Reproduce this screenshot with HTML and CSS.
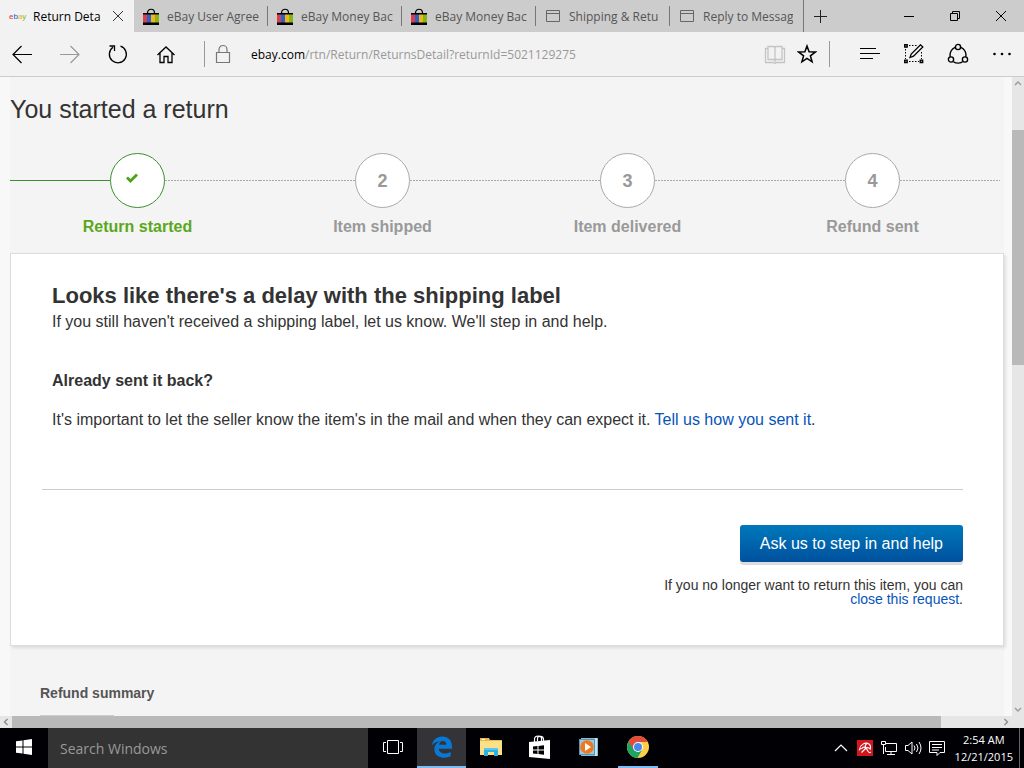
FILE: index.html
```html
<!DOCTYPE html>
<html lang="en">
<head>
<meta charset="utf-8">
<meta name="viewport" content="width=device-width, initial-scale=1">
<title>Return Details</title>
<link rel="stylesheet" href="styles.css">
</head>
<body>
<svg class="defs" width="0" height="0" aria-hidden="true">
  <symbol id="bag" viewBox="0 0 16 17">
    <path d="M4.500 5C4.500 0 11.500 0 11.500 5" fill="none" stroke="#000" stroke-width="1.200"/>
    <path d="M0 5h16v12H0z" fill="#000"/>
    <path d="M0 6.500h4v8H0z" fill="#dc3c4c"/><path d="M4 6.500h4v8H4z" fill="#2a63c4"/><path d="M8 6.500h4v8H8z" fill="#f0b41c"/><path d="M12 6.500h4v8h-4z" fill="#88b418"/>
  </symbol>
  <symbol id="page" viewBox="0 0 16 16">
    <path d="M1.500 2.500h13v11h-13zM1.500 5.500h13" fill="none" stroke="#666"/>
  </symbol>
</svg>

<header class="tabs">
  <div class="tab tab-active">
    <span class="logo" aria-hidden="true"><span class="r">e</span><span class="b">b</span><span class="y">a</span><span class="g">y</span></span>
    <button class="tab-title">Return Deta</button>
    <button class="tab-close" aria-label="Close tab"><svg width="12" height="12" viewBox="0 0 12 12"><path d="M1 1l10 10M11 1L1 11" stroke="#333" fill="none"/></svg></button>
  </div>
  <button class="tab"><svg width="16" height="17"><use href="#bag"/></svg><span class="tab-title">eBay User Agree</span></button>
  <button class="tab"><svg width="16" height="17"><use href="#bag"/></svg><span class="tab-title">eBay Money Bac</span></button>
  <button class="tab"><svg width="16" height="17"><use href="#bag"/></svg><span class="tab-title">eBay Money Bac</span></button>
  <button class="tab"><svg width="16" height="16"><use href="#page"/></svg><span class="tab-title">Shipping &amp; Retu</span></button>
  <button class="tab tab-last"><svg width="16" height="16"><use href="#page"/></svg><span class="tab-title">Reply to Messag</span></button>
  <button class="new-tab" aria-label="New tab"><svg width="14" height="14" viewBox="0 0 14 14"><path d="M7.500 1v13M1 7.500h13" stroke="#222" fill="none"/></svg></button>
  <div class="window-controls">
    <button aria-label="Minimize"><svg width="12" height="12" viewBox="0 0 12 12"><path d="M1 6.500h10" stroke="#000"/></svg></button>
    <button aria-label="Restore"><svg width="12" height="12" viewBox="0 0 12 12"><path d="M1.500 3.500h7v7h-7zM3.500 3.500v-2h7v7h-2" stroke="#000" fill="none"/></svg></button>
    <button aria-label="Close"><svg width="12" height="12" viewBox="0 0 12 12"><path d="M1 1l10 10M11 1L1 11" stroke="#000" fill="none"/></svg></button>
  </div>
</header>

<nav class="toolbar" aria-label="Browser">
  <div class="nav-buttons">
    <button aria-label="Back"><svg width="20" height="20" viewBox="0 0 20 20"><path d="M20 10.500H1M9.500 2L1 10.500 9.500 19" stroke="#000" stroke-width="1.200" fill="none"/></svg></button>
    <button aria-label="Forward"><svg width="20" height="20" viewBox="0 0 20 20"><path d="M0 10.500h19M10.500 2l8.500 8.500-8.500 8.500" stroke="#999" stroke-width="1.200" fill="none"/></svg></button>
    <button aria-label="Refresh"><svg width="20" height="20" viewBox="0 0 20 20"><path d="M12.500 2.200A8.500 8.500 0 1 1 5 3.300M1.500 2h5v5" stroke="#000" stroke-width="1.300" fill="none"/></svg></button>
    <button aria-label="Home"><svg width="20" height="20" viewBox="0 0 20 20"><path d="M1.500 11L10 3l8.500 8M4 9v9.500h4v-6h4v6h4V9" stroke="#000" stroke-width="1.300" fill="none"/></svg></button>
  </div>
  <span class="divider"></span>
  <svg class="lock" width="16" height="20" viewBox="0 0 16 20"><path d="M1.500 8.500h13v10h-13zM4 8.500V5.500a4 4 0 0 1 8 0v3" stroke="#777" stroke-width="1.200" fill="none"/></svg>
  <div class="address" role="textbox" contenteditable="true" aria-label="Address" spellcheck="false"><b>ebay.com</b>/rtn/Return/ReturnsDetail?returnId=5021129275</div>
  <div class="page-buttons">
    <button aria-label="Reading view"><svg width="22" height="20" viewBox="0 0 22 20"><path d="M11 3.500L10 2.500H4v13h6l1 1 1-1h6v-13h-6zM11 3v15M3.500 4.500h-2v14h8l1.500 1 1.500-1h8v-14h-2" stroke="#c4c4c4" stroke-width="1.300" fill="none"/></svg></button>
    <button aria-label="Add to favorites"><svg width="20" height="20" viewBox="0 0 20 20"><path d="M10 2l2.100 5.800 6.200.2-4.900 3.800 1.700 6-5.100-3.500-5.100 3.500 1.700-6L1.700 8l6.200-.2z" stroke="#000" stroke-width="1.500" fill="none"/></svg></button>
  </div>
  <span class="divider"></span>
  <div class="hub-buttons">
    <button aria-label="Hub"><svg width="20" height="20" viewBox="0 0 20 20"><path d="M0 4.500h16M0 9.500h20M0 14.500h13" stroke="#000" stroke-width="1.200"/></svg></button>
    <button aria-label="Make a web note"><svg width="20" height="20" viewBox="0 0 20 20"><path d="M5 1.500h8M1.500 5v10M17.500 8v7M5 17.500h10" stroke="#000" stroke-dasharray="1.500 1.500" fill="none"/><path d="M.700.700h2.500v2.500H.700zM.700 16.200h2.500v2.500H.700zM16.200 16.200h2.500v2.500h-2.500z" fill="#888" stroke="#000" stroke-width="1.300"/><path d="M6 13.500l1.200-3.500L16.500.8l2.300 2.200L9.500 12.200z" fill="#f2f2f2" stroke="#000" stroke-width="1.300"/></svg></button>
    <button aria-label="Share"><svg width="22" height="22" viewBox="0 0 22 22"><path d="M8 4.300A8.500 8.500 0 0 0 3.300 14M14 4.300A8.500 8.500 0 0 1 18.700 14M6.500 18.800a9 9 0 0 0 9 0" stroke="#000" stroke-width="1.400" fill="none"/><g fill="none" stroke="#000" stroke-width="1.400"><circle cx="11" cy="4" r="2.600"/><circle cx="4" cy="16.500" r="2.600"/><circle cx="18" cy="16.500" r="2.600"/></g></svg></button>
    <button aria-label="More"><svg width="20" height="4" viewBox="0 0 20 4"><circle cx="2.500" cy="2" r="1.300"/><circle cx="10" cy="2" r="1.300"/><circle cx="17.500" cy="2" r="1.300"/></svg></button>
  </div>
</nav>

<div class="viewport">
  <main class="page">
    <h1>You started a return</h1>
    <ol class="steps">
      <li class="step step-done"><div class="rail"><span class="circle"><svg width="14" height="10" viewBox="0 0 14 10" role="img" aria-label="Done"><path d="M2 4.500L5.500 8 12 1.500" stroke="#4ba21a" stroke-width="2.800" fill="none"/></svg></span></div><span>Return started</span></li>
      <li class="step"><div class="rail"><span class="circle">2</span></div><span>Item shipped</span></li>
      <li class="step"><div class="rail"><span class="circle">3</span></div><span>Item delivered</span></li>
      <li class="step"><div class="rail"><span class="circle">4</span></div><span>Refund sent</span></li>
    </ol>
    <section class="card">
      <div class="message">
        <h2>Looks like there's a delay with the shipping label</h2>
        <p>If you still haven't received a shipping label, let us know. We'll step in and help.</p>
        <h3>Already sent it back?</h3>
        <p>It's important to let the seller know the item's in the mail and when they can expect it. <a href="#">Tell us how you sent it</a>.</p>
      </div>
      <div class="actions">
        <button class="primary">Ask us to step in and help</button>
        <p>If you no longer want to return this item, you can<br><a href="#">close this request</a>.</p>
      </div>
    </section>
    <section class="summary">
      <h4>Refund summary</h4>
      <div class="summary-rule"></div>
    </section>
  </main>
  <div class="scroll-y" aria-hidden="true">
    <svg width="8" height="12" viewBox="0 0 8 12"><path d="M1 8l3-3 3 3" stroke="#999" stroke-width="1.300" fill="none"/></svg>
    <div class="track-y"><div class="thumb-y"></div></div>
    <svg width="8" height="12" viewBox="0 0 8 12"><path d="M1 4l3 3 3-3" stroke="#999" stroke-width="1.300" fill="none"/></svg>
  </div>
</div>
<div class="scroll-x" aria-hidden="true">
  <svg width="12" height="12" viewBox="0 0 12 12"><path d="M7.500 3l-3 3 3 3" stroke="#888" stroke-width="1.300" fill="none"/></svg>
  <div class="track-x"><div class="thumb-x"></div></div>
  <svg width="12" height="12" viewBox="0 0 12 12"><path d="M4.500 3l3 3-3 3" stroke="#888" stroke-width="1.300" fill="none"/></svg>
</div>

<footer class="taskbar">
  <button class="task" aria-label="Start"><svg width="16" height="16" viewBox="0 0 16 16"><path d="M0 2.300L6.500 1.400v6.100H0zM7.500 1.200L16 0v7.500H7.500zM0 8.500h6.500v6.100L0 13.700zM7.500 8.500H16V16l-8.500-1.200z" fill="#fff"/></svg></button>
  <input class="search" type="text" placeholder="Search Windows" aria-label="Search Windows">
  <button class="task" aria-label="Task view"><svg width="20" height="16" viewBox="0 0 20 16"><path d="M4.500 1.500h11v13h-11zM3 3.500H.500v9H3M17 3.500h2.500v9H17" stroke="#fff" fill="none"/></svg></button>
  <button class="task task-current" aria-label="Edge"><svg width="20" height="22" viewBox="0 0 20 22"><path d="M0 9.600C.7 4 4.700.5 10.300.5 16.500.5 20 4.800 20 10.500v2.200H6.700c.2 3.200 3 4.800 6.300 4.800 2.300 0 4.200-.6 5.700-1.500v4.300c-1.800.9-4 1.400-6.500 1.400C6.300 21.700 2.400 18.500 2.400 13.300c0-3.500 2-6.500 5.200-8C4.500 5.600 1.600 7 0 9.600zm7-.9h7.300c0-2.400-1.200-3.700-3.500-3.700C8.700 5 7.300 6.500 7 8.700z" fill="#0878d7"/></svg></button>
  <button class="task" aria-label="File Explorer"><svg width="22" height="20" viewBox="0 0 22 20"><path d="M0 1h9l1 2h12v15H0z" fill="#e9b94a"/><path d="M0 4h22v14H0z" fill="#fbe08a"/><path d="M4 11h14v8h-4v-4H8v4H4z" fill="#2fb0df"/><path d="M4 11h14v2H4z" fill="#55c9ec"/><path d="M2 2h3v1H2z" fill="#fff"/></svg></button>
  <button class="task" aria-label="Store"><svg width="22" height="24" viewBox="0 0 22 24"><path d="M5.500 7V4c0-4 7-4 7 0v2M8.500 6V3.500c0-3 6-3 6 1V6" stroke="#fff" stroke-width="1.200" fill="none"/><path d="M0 7l21-2v19L0 22z" fill="#fff"/><path d="M4 11.500l4.500-.5v3.500H4zM9.500 10.900l5.500-.6v4.200H9.500zM4 15.500h4.500V19L4 18.500zM9.500 15.500H15v4.200l-5.500-.6z" fill="#000"/></svg></button>
  <button class="task" aria-label="Media Player"><svg width="22" height="20" viewBox="0 0 22 20"><path d="M3 1h17v18H3z" fill="#80bfd9"/><path d="M17 1h2v18h-2z" fill="#c7e5f0"/><path d="M1 2h16v16H1z" fill="#5a94b5"/><path d="M2 3h14v14H2z" fill="#9ccbe0"/><circle cx="9" cy="10" r="6.800" fill="#ed7a22"/><path d="M7 6l6 4-6 4z" fill="#fff"/></svg></button>
  <button class="task task-open" aria-label="Chrome"><svg width="22" height="22" viewBox="0 0 22 22"><circle cx="11" cy="11" r="11" fill="#fdd047"/><path d="M11 11L1.500 5.500A11 11 0 0 0 10.500 22l4.800-8.500z" fill="#1da462"/><path d="M1.500 5.500A11 11 0 0 1 20.800 6H11l-4.300 7.500z" fill="#e24c3d"/><circle cx="11" cy="11" r="5" fill="#fff"/><circle cx="11" cy="11" r="4" fill="#4a87ee"/></svg></button>
  <div class="tray">
    <button aria-label="Show hidden icons"><svg width="14" height="10" viewBox="0 0 14 10"><path d="M1 8l6-6 6 6" stroke="#fff" stroke-width="1.200" fill="none"/></svg></button>
    <button aria-label="Antivirus"><svg width="16" height="16" viewBox="0 0 16 16"><path d="M0 0h16v16H0z" fill="#d4151e"/><path d="M2.500 9.500C3 5 8 1.500 12 4c1.500 1 1.800 3 1.300 5.200C12 7.800 10.500 7.300 9.300 8 7.500 6.800 5.800 7 4.800 8.500c-.8-.2-1.600.2-2.300 1z" stroke="#fff" stroke-width="1.100" fill="none"/><path d="M9 8l-4.500 4.500M9 8l2.500 4c.7.900 1.600.7 2.300 0M9 8C7.500 6 8.500 4.500 10 3.500" stroke="#fff" stroke-width="1.200" fill="none"/></svg></button>
    <button aria-label="Network"><svg width="18" height="16" viewBox="0 0 18 16"><path d="M6 3.500h10.500v8H5.500V7M11 12v2.500M7 14.500h8M1.500 1.500h4v3h-4zM3.500 5v9" stroke="#fff" fill="none"/></svg></button>
    <button aria-label="Volume"><svg width="18" height="16" viewBox="0 0 18 16"><path d="M1.500 5.500H4l4-3.500v12l-4-3.500H1.500zM10 5.500q2 2.500 0 5M12.500 4q3 4 0 8M15 2q4 6 0 12" stroke="#fff" fill="none"/></svg></button>
    <button aria-label="Notifications"><svg width="16" height="16" viewBox="0 0 16 16"><path d="M.500 1.500h15v11H11l-3 3v-3H.500zM3 4.500h10M3 7.500h10M3 10h7" stroke="#fff" fill="none"/></svg></button>
    <time class="clock" datetime="2015-12-21T02:54">2:54 AM<br>12/21/2015</time>
    <span class="show-desktop"></span>
  </div>
</footer>
</body>
</html>
```
FILE: styles.css
```css
* { box-sizing: border-box; }
html { background: #f2f2f2; }
body {
  margin: 0;
  min-height: 100vh;
  display: flex;
  flex-direction: column;
  font-family: "Liberation Sans", Arial, sans-serif;
  font-size: 16px;
  color: #333;
}
button, input { font: inherit; color: inherit; border: 0; margin: 0; padding: 0; background: none; }
button { display: flex; align-items: center; justify-content: center; }
h1, h2, h3, h4, p, ol { margin: 0; padding: 0; }
svg { display: block; flex: none; }
a { color: #0654ba; text-decoration: none; }
.defs { position: absolute; }

.tabs, .toolbar { font-family: "Open Sans", "Noto Sans", sans-serif; font-size: 12px; }
.tabs { display: flex; height: 32px; background: #ccc; color: #555; }
.tab {
  flex: 0 1 134px;
  min-width: 0;
  display: flex;
  align-items: center;
  justify-content: flex-start;
  gap: 8px;
  padding: 0 8px 0 9px;
  background: linear-gradient(#777, #777) right center / 1px 20px no-repeat;
}
.tab-active { background: #f2f2f2; color: #000; padding-right: 9px; }
.tab-active .tab-title { flex: 1; justify-content: flex-start; }
.tab-last { background: none; border-right: 1px solid #777; }
.tab-title { overflow: hidden; white-space: nowrap; min-width: 0; }
.tab-close { width: 14px; height: 20px; }
.logo { font: 8px "Liberation Sans", Arial, sans-serif; width: 16px; }
.r { color: #e53238; } .b { color: #0064d2; } .y { color: #f5af02; } .g { color: #86b817; }
.new-tab { width: 32px; }
.window-controls { display: flex; margin-left: auto; }
.window-controls button { width: 46px; }

.toolbar {
  display: flex;
  align-items: center;
  height: 45px;
  padding: 0 4px 0 2px;
  background: #f2f2f2;
  border-bottom: 1px solid #ccc;
}
.nav-buttons, .hub-buttons { display: flex; gap: 8px; }
.page-buttons { display: flex; }
.nav-buttons button { width: 40px; height: 40px; }
.page-buttons button { width: 32px; height: 40px; }
.hub-buttons button { width: 36px; height: 40px; }
.divider { width: 1px; height: 26px; background: #999; margin: 0 10px 0 18px; }
.page-buttons + .divider { margin: 0 22px 0 6px; }
.address { flex: 1; margin-left: 20px; min-width: 0; overflow: hidden; white-space: nowrap; color: #999; outline: 0; }
.address b { font-weight: 400; color: #000; }

.viewport { flex: 1; display: flex; background: #f8f8f8; }
.page {
  flex: 1;
  min-width: 0;
  padding: 16px 0 0;
  margin: 0 8px 0 10px;
  background: #f4f4f4;
}
h1 { font-size: 25px; line-height: 32px; font-weight: 400; }
.steps { display: flex; list-style: none; padding: 28px 9px 16px 5px; }
.step { flex: 1; text-align: center; font-weight: 700; line-height: 20px; color: #999; }
.rail { display: flex; align-items: center; margin-bottom: 9px; }
.rail::before, .rail::after {
  content: "";
  flex: 1;
  height: 1px;
  background: repeating-linear-gradient(90deg, #aaa 0 2px, transparent 2px 3px);
}
.step:first-child .rail { margin-left: -5px; }
.step:last-child .rail { margin-right: -5px; }
.step:first-child .rail::before,
.step:last-child .rail::after { flex: none; width: calc(50% - 25px); }
.step:first-child .rail::before { background: #39912b; }
.circle {
  display: flex;
  align-items: center;
  justify-content: center;
  width: 55px;
  height: 55px;
  border: 1px solid #aaa;
  border-radius: 50%;
  background: #fff;
  font-size: 18px;
}
.step-done { color: #5ba71b; }
.step-done .circle { border-color: #39912b; padding: 0 12px 6px 0; }

.card {
  padding: 28px 40px 39px 31px;
  background: #fff;
  border: 1px solid #ddd;
  box-shadow: 2px 2px 3px rgba(0, 0, 0, .1);
}
.message { padding: 0 10px 59px; border-bottom: 1px solid #ccc; line-height: 20px; }
h2 { font-size: 22px; line-height: 28px; margin-bottom: 2px; }
h3 { font-size: 16px; margin: 39px 0 19px; }
.actions { display: flex; flex-direction: column; align-items: flex-end; padding-top: 35px; text-align: right; font-size: 14px; line-height: 14px; }
.primary {
  height: 37px;
  padding: 0 20px;
  border-radius: 3px;
  background: linear-gradient(#0079bc, #00509d);
  box-shadow: 0 3px 0 #ddd;
  color: #fff;
  font-size: 16px;
  margin-bottom: 16px;
}
.summary { padding: 37px 30px 0; color: #555; }
h4 { font-size: 14px; line-height: 20px; margin-bottom: 12px; }
.summary-rule { width: 74px; height: 1px; background: #ccc; }

.scroll-y { width: 12px; background: #e6e6e6; display: flex; flex-direction: column; align-items: center; }
.track-y { flex: 1; align-self: stretch; display: flex; flex-direction: column; padding: 41px 0; }
.thumb-y { flex: 0 0 44%; background: #b9b9b9; }
.scroll-x { height: 12px; background: #e6e6e6; display: flex; }
.track-x { flex: 1; display: flex; }
.thumb-x { width: 94%; background: #b9b9b9; }
.scroll-x svg:last-child { margin-right: 12px; }

.taskbar { display: flex; height: 40px; background: #000005; font-family: "Open Sans", "Noto Sans", sans-serif; }
.task { width: 49px; border-bottom: 2px solid transparent; flex: none; }
.task:first-child { width: 48px; }
.task-current { background: #343438; border-color: #7cbcf2; }
.task-open { background: linear-gradient(#7cbcf2, #7cbcf2) center bottom / 40px 2px no-repeat border-box; }
.search { flex: 0 1 320px; min-width: 0; background: #333; padding: 0 12px; font-size: 14px; color: #fff; }
.search::placeholder { color: #999; opacity: 1; }
.tray { display: flex; align-items: center; margin-left: auto; color: #fff; }
.tray button { width: 24px; height: 40px; }
.clock { padding: 0 6px; font-size: 11px; line-height: 17px; text-align: center; }
.show-desktop { width: 5px; height: 40px; border-left: 1px solid #666; }
```
